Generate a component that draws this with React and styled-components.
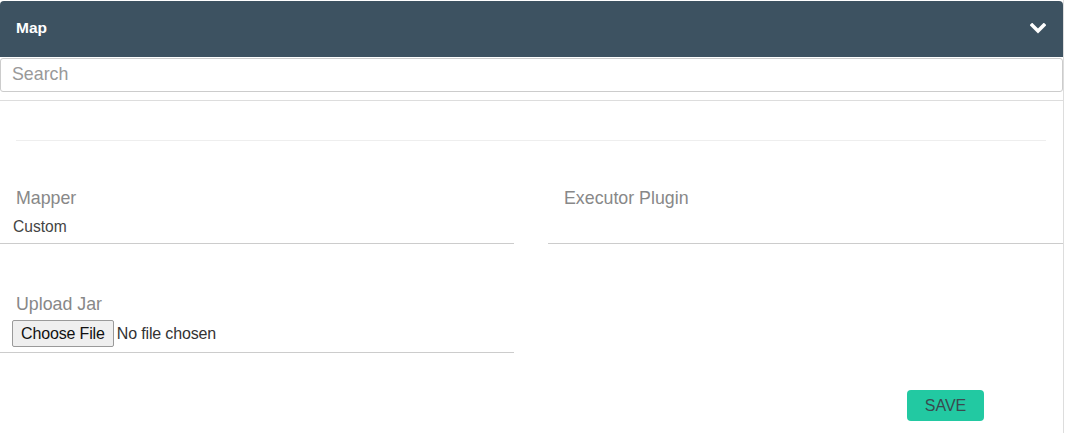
import React from "react";
import styled, { createGlobalStyle } from "styled-components";

const Global = createGlobalStyle`
  html, body { margin: 0; padding: 0; background: #fff; }
  body { font-family: "Liberation Sans", Arial, sans-serif; }
  * { box-sizing: border-box; }
`;

const Panel = styled.div`
  width: 1064px;
  min-height: 433px;
  padding-top: 1px;
  border-right: 1px solid #ddd;
`;

const Header = styled.div`
  height: 56px;
  width: 1063px;
  background: #3d5261;
  border-radius: 4px 4px 0 0;
  display: flex;
  align-items: center;
  justify-content: space-between;
  padding: 0 17px 2px 16px;
  color: #fff;
  font-size: 15.5px;
  font-weight: bold;
`;

const Search = styled.input`
  display: block;
  width: 1063px;
  height: 34px;
  margin-top: 1px;
  border: 1px solid #ccc;
  border-radius: 3px;
  padding: 0 11px 2px;
  font-family: "Liberation Sans", Arial, sans-serif;
  font-size: 17.8px;
  color: #555;
  outline: none;
  &::placeholder { color: #999; }
`;

const Rule = styled.div`
  height: 1px;
  background: ${(p) => p.$color};
  margin: ${(p) => p.$margin};
`;

const Row = styled.div`
  display: flex;
  gap: 34px;
  margin-top: ${(p) => p.$top}px;
`;

const Field = styled.div`
  width: ${(p) => p.$width}px;
  border-bottom: 1px solid #ccc;
  padding-bottom: ${(p) => p.$pb}px;
`;

const Label = styled.div`
  font-size: 17.8px;
  line-height: 20px;
  color: #888;
  padding-left: 16px;
`;

const Value = styled.div`
  font-size: 15.6px;
  line-height: 20px;
  height: 20px;
  color: #444;
  padding-left: 13px;
  margin-top: 9px;
`;

const FileInput = styled.input`
  display: block;
  margin: 6px 0 0 12px;
  height: 27px;
  font-family: "Liberation Sans", Arial, sans-serif;
  font-size: 16px;
  letter-spacing: -0.15px;
  color: #333;
  &::file-selector-button {
    font-family: "Liberation Sans", Arial, sans-serif;
    font-size: 16px;
    letter-spacing: -0.15px;
    height: 27px;
    padding: 0 8px;
    margin-right: 3px;
    border: 1px solid #9a9a9a;
    border-radius: 2px;
    background: #efefef;
    color: #111;
  }
`;

const Actions = styled.div`
  display: flex;
  justify-content: flex-end;
  padding-right: 79px;
  margin-top: 37px;
`;

const SaveButton = styled.button`
  width: 77px;
  height: 31px;
  border: none;
  border-radius: 4px;
  background: #22c9a2;
  color: #3a4a4f;
  font-family: "Liberation Sans", Arial, sans-serif;
  font-size: 16px;
  cursor: pointer;
`;

const Chevron = () => (
  <svg width="16" height="11" viewBox="0 0 16 11">
    <polyline points="2.2,2.2 8,8 13.8,2.2" fill="none" stroke="#fff" strokeWidth="3.6" strokeLinecap="square" strokeLinejoin="miter" />
  </svg>
);

export default function App() {
  return (
    <>
      <Global />
      <Panel>
        <Header>
          <span>Map</span>
          <Chevron />
        </Header>
        <Search placeholder="Search" />
        <Rule $color="#ddd" $margin="8px 0 0 0" />
        <Rule $color="#eee" $margin="39px 17px 0 16px" />
        <Row $top={47}>
          <Field $width={514} $pb={6}>
            <Label>Mapper</Label>
            <Value>Custom</Value>
          </Field>
          <Field $width={515} $pb={6}>
            <Label>Executor Plugin</Label>
            <Value />
          </Field>
        </Row>
        <Row $top={50}>
          <Field $width={514} $pb={5}>
            <Label>Upload Jar</Label>
            <FileInput type="file" />
          </Field>
        </Row>
        <Actions>
          <SaveButton>SAVE</SaveButton>
        </Actions>
      </Panel>
    </>
  );
}
